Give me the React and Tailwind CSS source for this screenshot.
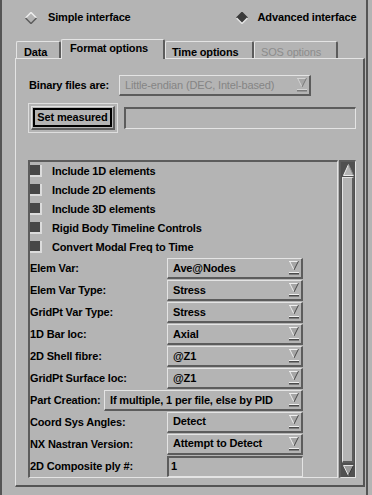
const raised =
  'border-t border-l border-t-[#e4e4e4] border-l-[#e4e4e4] border-b-2 border-r-2 border-b-[#5c5c5c] border-r-[#5c5c5c]'
const sunken =
  'border-t-2 border-l-2 border-t-[#5c5c5c] border-l-[#5c5c5c] border-b border-r border-b-[#e4e4e4] border-r-[#e4e4e4]'

function MenuArrow({ dim }) {
  const light = dim ? '#d4d4d4' : '#eeeeee'
  const dark = dim ? '#7a7a7a' : '#4a4a4a'
  return (
    <svg width="10" height="14" viewBox="0 0 10 14" className="shrink-0">
      <polygon points="0,0 10,0 5,9" fill="#a6a6a6" />
      <line x1="0" y1="0.5" x2="10" y2="0.5" stroke={light} />
      <line x1="0.5" y1="0" x2="5" y2="9" stroke={light} />
      <line x1="9.5" y1="0" x2="5" y2="9" stroke={dark} />
      <rect x="0" y="11" width="10" height="1" fill={light} />
      <rect x="0" y="12" width="10" height="1.5" fill={dark} />
    </svg>
  )
}

function OptionMenu({ value, width, dim }) {
  return (
    <div
      className={`${raised} h-[21px] flex items-center justify-between pl-[5px] pr-[2px] ${width}`}
    >
      <span className={dim ? 'text-[#858585] font-normal' : ''}>{value}</span>
      <MenuArrow dim={dim} />
    </div>
  )
}

function Diamond({ on }) {
  return (
    <svg width="12" height="12" viewBox="0 0 12 12">
      <polygon points="6,0.5 11.5,6 6,11.5 0.5,6" fill={on ? '#3a3a3a' : '#b4b4b4'} />
      <polyline points="0.5,6 6,0.5 11.5,6" fill="none" stroke={on ? '#3a3a3a' : '#eeeeee'} strokeWidth="1.5" />
      <polyline points="0.5,6 6,11.5 11.5,6" fill="none" stroke={on ? '#e4e4e4' : '#5c5c5c'} strokeWidth="1.5" />
    </svg>
  )
}

function Check({ label }) {
  return (
    <div className="h-[19px] flex items-center">
      <div className="w-[12px] h-[12px] bg-[#474747] border-b-2 border-r-2 border-[#dcdcdc]" />
      <span className="ml-[10px]">{label}</span>
    </div>
  )
}

function Row({ label, labelW = 'w-[137px]', children }) {
  return (
    <div className="h-[22px] flex items-center">
      <span className={`${labelW} shrink-0`}>{label}</span>
      {children}
    </div>
  )
}

const tabs = [
  { name: 'Data', w: 'w-[45px]', pl: 'pl-[7px]' },
  { name: 'Format options', w: 'w-[104px]', pl: 'pl-[8px]', active: true },
  { name: 'Time options', w: 'w-[89px]', pl: 'pl-[6px]' },
  { name: 'SOS options', w: 'w-[84px]', pl: 'pl-[6px]', dim: true },
]

export default function App() {
  return (
    <div className="w-[372px] h-[495px] bg-[#b4b4b4] text-black text-[11px] font-bold tracking-[-0.15px] font-['Liberation_Sans',Arial,sans-serif] shadow-[inset_2px_0_0_#555555,inset_-4px_0_0_#b4b4b4,inset_-6px_0_0_#555555] overflow-hidden">
      <div className="h-[34px] flex items-center pt-[1px]">
        <div className="ml-[25px]">
          <Diamond />
        </div>
        <span className="ml-[11px]">Simple interface</span>
        <div className="ml-[105px]">
          <Diamond on />
        </div>
        <span className="ml-[10px]">Advanced interface</span>
      </div>

      <div className="mt-[5px] h-[19px] flex items-end pl-[16px]">
        {tabs.map((t) => (
          <div
            key={t.name}
            className={`${t.w} ${t.pl} ${
              t.active ? 'h-[20px] -mb-px relative z-10 pt-[2px]' : 'h-[17px] pt-[4px]'
            } ${t.dim ? 'text-[#8c8c8c] font-normal' : ''} bg-[#b4b4b4] border-t border-l border-t-[#e4e4e4] border-l-[#e4e4e4] border-r-2 border-r-[#5c5c5c] rounded-t-[2px] whitespace-nowrap leading-[12px]`}
          >
            {t.name}
          </div>
        ))}
      </div>

      <div className="ml-[15px] w-[350px] h-[429px] border-t border-l border-t-[#e4e4e4] border-l-[#e4e4e4] border-b-2 border-r-2 border-b-[#555555] border-r-[#555555] pl-[12px]">
        <div className="mt-[16px] flex items-center">
          <span className="w-[91px] pl-[1px] shrink-0">Binary files are:</span>
          <OptionMenu value="Little-endian (DEC, Intel-based)" width="w-[192px]" dim />
        </div>

        <div className="mt-[7px] flex items-center">
          <div className="w-[90px] h-[30px] border border-[#dedede] p-[2px]">
            <div className={`${raised} w-full h-full p-[1px]`}>
              <div className="w-full h-full border-2 border-black flex items-center justify-center">
                Set measured
              </div>
            </div>
          </div>
          <div className={`${sunken} ml-[6px] w-[232px] h-[22px]`} />
        </div>

        <div className="mt-[27px] flex">
          <div className={`${sunken} w-[310px] h-[318px] flex flex-col`}>
            <Check label="Include 1D elements" />
            <Check label="Include 2D elements" />
            <Check label="Include 3D elements" />
            <Check label="Rigid Body Timeline Controls" />
            <Check label="Convert Modal Freq to Time" />
            <div className="h-[1px]" />
            <Row label="Elem Var:">
              <OptionMenu value="Ave@Nodes" width="w-[136px]" />
            </Row>
            <Row label="Elem Var Type:">
              <OptionMenu value="Stress" width="w-[136px]" />
            </Row>
            <Row label="GridPt Var Type:">
              <OptionMenu value="Stress" width="w-[136px]" />
            </Row>
            <Row label="1D Bar loc:">
              <OptionMenu value="Axial" width="w-[136px]" />
            </Row>
            <Row label="2D Shell fibre:">
              <OptionMenu value="@Z1" width="w-[136px]" />
            </Row>
            <Row label="GridPt Surface loc:">
              <OptionMenu value="@Z1" width="w-[136px]" />
            </Row>
            <Row label="Part Creation:" labelW="w-[74px]">
              <OptionMenu value="If multiple, 1 per file, else by PID" width="w-[199px]" />
            </Row>
            <Row label="Coord Sys Angles:">
              <OptionMenu value="Detect" width="w-[136px]" />
            </Row>
            <Row label="NX Nastran Version:">
              <OptionMenu value="Attempt to Detect" width="w-[136px]" />
            </Row>
            <Row label="2D Composite ply #:">
              <div className={`${sunken} w-[136px] h-[21px] flex items-center pl-[2px]`}>1</div>
            </Row>
          </div>

          <div className="ml-[1px] w-[17px] h-[318px] border-t-2 border-l-2 border-t-[#5c5c5c] border-l-[#5c5c5c] border-b border-r border-b-[#e4e4e4] border-r-[#e4e4e4] bg-[#505050] flex flex-col">
            <div className="h-[15px] flex items-center justify-center">
              <svg width="11" height="12" viewBox="0 0 11 12">
                <polygon points="5.5,0.5 10.5,11.5 0.5,11.5" fill="#b4b4b4" />
                <line x1="5.5" y1="0.5" x2="0.5" y2="11.5" stroke="#eeeeee" />
                <line x1="5.5" y1="0.5" x2="10.5" y2="11.5" stroke="#8a8a8a" />
                <line x1="0.5" y1="11.5" x2="10.5" y2="11.5" stroke="#eeeeee" />
              </svg>
            </div>
            <div className="flex-1 mx-[1px] bg-[#b4b4b4] border-t border-l border-t-[#e4e4e4] border-l-[#e4e4e4] border-b-2 border-r-2 border-b-[#5c5c5c] border-r-[#5c5c5c]" />
            <div className="h-[14px] flex items-center justify-center">
              <svg width="11" height="11" viewBox="0 0 11 11">
                <polygon points="0.5,0.5 10.5,0.5 5.5,10.5" fill="#9a9a9a" />
                <line x1="0.5" y1="0.5" x2="10.5" y2="0.5" stroke="#e4e4e4" />
                <line x1="0.5" y1="0.5" x2="5.5" y2="10.5" stroke="#e4e4e4" />
                <line x1="10.5" y1="0.5" x2="5.5" y2="10.5" stroke="#3a3a3a" />
              </svg>
            </div>
          </div>
        </div>
      </div>
    </div>
  )
}
